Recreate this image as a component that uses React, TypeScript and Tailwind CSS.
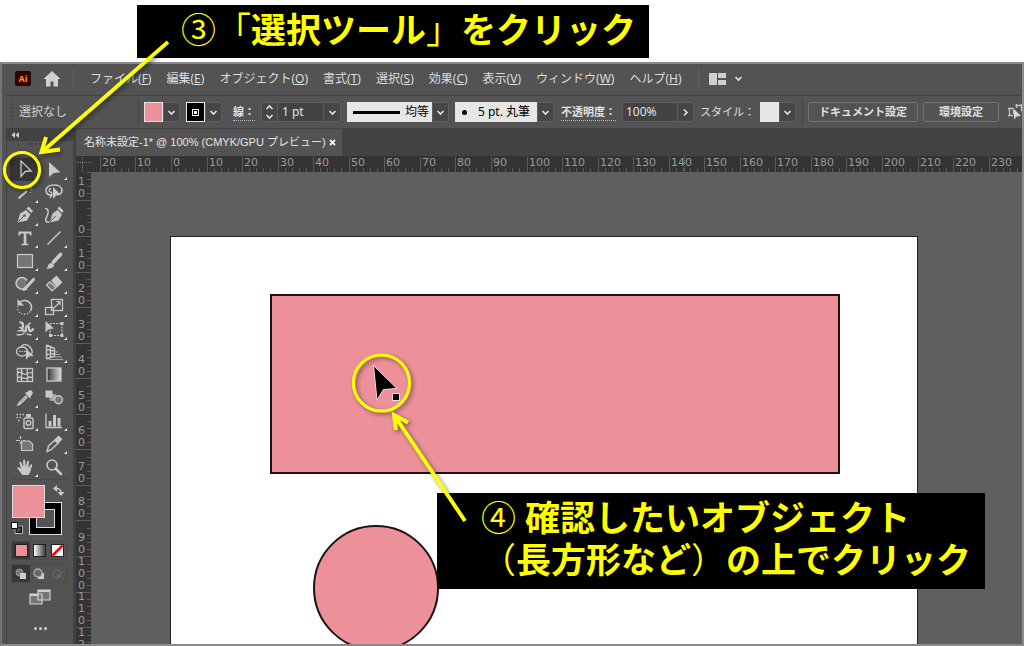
import type { ReactNode } from 'react';
import clsx from 'clsx';

const MENUS = [
  { label: 'ファイル', key: 'F' },
  { label: '編集', key: 'E' },
  { label: 'オブジェクト', key: 'O' },
  { label: '書式', key: 'T' },
  { label: '選択', key: 'S' },
  { label: '効果', key: 'C' },
  { label: '表示', key: 'V' },
  { label: 'ウィンドウ', key: 'W' },
  { label: 'ヘルプ', key: 'H' },
];

// one centimetre on the rulers, in pixels
const RULER_STEP = 35.55;

interface Tool {
  name: string;
  icon: ReactNode;
  more?: boolean;
}

// icons are drawn in a 22x22 box, light grey on the panel
const TOOLS: Tool[] = [
  { name: '選択ツール', icon: <path d="M7 3v15.5l4.3-5 5.9-.5z" fill="none" strokeWidth="1.3" /> },
  { name: 'ダイレクト選択ツール', more: true, icon: <path d="M6 4v15l4.8-4 6.6-.8z" stroke="none" /> },
  {
    name: '自動選択ツール',
    more: true,
    icon: (
      <>
        <path d="M4.500 17.500 13 10" strokeWidth="2" />
        <path d="M15 5v2.500M18.500 9H17M11 6l1.300 1.300M17.800 5.800l-1.300 1.300M16 11l1 1" fill="none" strokeWidth="1" />
      </>
    ),
  },
  {
    name: 'なげなわツール',
    icon: (
      <>
        <path d="M9 14c-3 .5-6-1-6-4.500S6.500 4 11 4s8 2 8 5-1.500 3.500-2 4" fill="none" strokeWidth="1.600" />
        <path d="M8 7.500c-2 0-2.500 3-.5 3.500s2 3-.5 6" fill="none" strokeWidth="1.400" />
        <path d="M10 6v12l3-3.500 5-.5z" stroke="none" />
      </>
    ),
  },
  {
    name: 'ペンツール',
    more: true,
    icon: (
      <>
        <path d="M3.500 18.500l2.500-9 6-3.500 4.500 4.500-3.500 6z" stroke="none" />
        <path d="M12.500 4.500l2-2 4.500 4.500-1.500 2z" stroke="none" />
        <path d="M4.500 17.500l5.500-5.500" stroke="#535353" strokeWidth="1" />
        <circle cx="10.500" cy="11.500" r="1.200" fill="#535353" stroke="none" />
      </>
    ),
  },
  {
    name: '曲線ツール',
    icon: (
      <>
        <path d="M7 18.500l2.500-9 5-3.500 4.500 4.500-3.500 6z" stroke="none" />
        <path d="M14.500 4.500l2-2 4 4.500-1.500 2z" stroke="none" />
        <path d="M7.500 17.500l5-5.500" stroke="#535353" strokeWidth="1" />
        <path d="M2 4.500c3 0 4 2.500 2.500 6.500s-3 5-1 7h3" fill="none" strokeWidth="1.500" />
      </>
    ),
  },
  {
    name: '文字ツール',
    more: true,
    icon: <path d="M4.500 4.500h13v4h-1.600l-.6-2H12.300v10l2.200.6v1.200h-7v-1.200l2.200-.6v-10H6.700l-.6 2H4.500z" stroke="none" />,
  },
  { name: '直線ツール', more: true, icon: <path d="M4.500 17.500 17.500 4.500" strokeWidth="1.500" /> },
  { name: '長方形ツール', more: true, icon: <rect x="3.500" y="4.500" width="15" height="13" fill="#767676" strokeWidth="1.200" /> },
  {
    name: 'ブラシツール',
    more: true,
    icon: (
      <>
        <path d="M17.500 4.500 10.500 12" strokeWidth="3.600" strokeLinecap="round" />
        <path d="M3 18.500c2-.5 1.500-3.500 3.500-5s4.500 0 4.500 1.700-2.500 4-8 3.300z" stroke="none" />
      </>
    ),
  },
  {
    name: 'Shaper ツール',
    more: true,
    icon: (
      <>
        <path d="M10.500 15.500A5.800 5.800 0 1 1 13 7.500" fill="#767676" strokeWidth="1.600" />
        <path d="M19.500 6.500 12.500 14" strokeWidth="3.200" strokeLinecap="round" />
        <path d="M8.500 18.500l2-5 3.500 2.700z" stroke="none" />
      </>
    ),
  },
  {
    name: '消しゴムツール',
    more: true,
    icon: (
      <>
        <path d="M8 7.500l5.500-5 6 7-5.500 5z" stroke="none" />
        <path d="M6.800 8.800 3.500 12l5.500 6 4-3.500z" fill="#767676" strokeWidth="1.200" />
      </>
    ),
  },
  {
    name: '回転ツール',
    more: true,
    icon: (
      <>
        <path d="M5.500 6.500c3-3 8-2.500 10.500.5s2 5 .5 8" fill="none" strokeWidth="1.600" />
        <path d="M16 15.500c-3 4-9 3.500-11.500-.5-1-2-1-4-.5-5" fill="none" strokeWidth="1.300" strokeDasharray="1.200 1.600" />
        <path d="M3.500 3v6.500H10z" stroke="none" />
      </>
    ),
  },
  {
    name: '拡大・縮小ツール',
    more: true,
    icon: (
      <>
        <rect x="8.500" y="3.500" width="11" height="11" fill="none" strokeWidth="1.300" />
        <rect x="2.500" y="11.500" width="8" height="7" fill="none" strokeWidth="1.300" />
        <path d="M11.500 11.500 17 6M13.500 5.700H17v3.500" fill="none" strokeWidth="1.300" />
      </>
    ),
  },
  {
    name: '線幅ツール',
    more: true,
    icon: (
      <>
        <path d="M5.500 4.500c2-.5 4 .5 3.500 3s-2 3.500 0 5 3.500 1 3-1 1-4.500 2.500-3-.5 4 1.500 4.500 2.500-1 3.500-2.500" fill="none" strokeWidth="2.400" />
        <path d="M2.500 16.500c3 .8 6 .3 8-1.500M5 9.500l3 .5M3.500 13l5-.5M12.500 16l5 1M14 6.500l2.500-1.500" fill="none" strokeWidth="1.500" />
      </>
    ),
  },
  {
    name: '自由変形ツール',
    more: true,
    icon: (
      <>
        <path d="M7 5.500h12v12H7z" fill="none" strokeWidth="1.200" strokeDasharray="2 1" />
        <path d="M17.500 4h3v3h-3zM17.500 16h3v3h-3zM6 16h3v3H6z" stroke="none" />
        <path d="M2.500 3v11.500l3-3.200 5.500-.8z" stroke="none" />
      </>
    ),
  },
  {
    name: 'シェイプ形成ツール',
    more: true,
    icon: (
      <>
        <ellipse cx="8" cy="10.500" rx="5.500" ry="4.500" fill="none" strokeWidth="1.300" />
        <path d="M7 5.500C9 2.500 14 3.500 16 6s3 5 1.500 7" fill="none" strokeWidth="1.300" />
        <path d="M5 10.500h7" strokeDasharray="1.500 1" />
        <path d="M12 8v11l2.800-3.500 5-.5z" stroke="none" />
      </>
    ),
  },
  {
    name: '遠近グリッドツール',
    more: true,
    icon: (
      <>
        <path d="M3.500 4v14M3.500 4l8 3.500V15l-8 3M3.500 8.500l8 1.500M3.500 13.500l8-1M7.500 6v10.500" fill="none" strokeWidth="1.400" />
        <path d="M12 11h3M12 13.500h5M10 16h9M6 18.500h14" strokeWidth="1" opacity="0.7" />
      </>
    ),
  },
  {
    name: 'メッシュツール',
    icon: (
      <>
        <rect x="3.500" y="4.500" width="15" height="13" fill="none" strokeWidth="1.300" />
        <path d="M3.500 9c4-3 6 3 9 1s4-2 6-1M3.500 14c4-3 6 2 9 0s4-1 6 0M7 4.500c3 4-2 8 1 13M14 4.500c-3 4 2 8-1 13" fill="none" strokeWidth="1.300" />
      </>
    ),
  },
  { name: 'グラデーションツール', icon: <rect x="4" y="4" width="14" height="13" fill="url(#grad-dark)" strokeWidth="1.300" /> },
  {
    name: 'スポイトツール',
    more: true,
    icon: (
      <>
        <path d="M12.500 8.500 5 16l-1 2 2-.8L13.500 10" fill="none" strokeWidth="1.400" />
        <path d="M11 6l5 5.500 1-1.500-.3-.8c2-1.500 2.800-3.700 1.300-5.200s-3.500-.7-5 1.200L12.500 5z" stroke="none" />
      </>
    ),
  },
  {
    name: 'ブレンドツール',
    icon: (
      <>
        <rect x="2.500" y="3.500" width="7" height="7" stroke="none" />
        <rect x="6.500" y="7" width="7" height="7" rx="2" stroke="none" opacity="0.7" />
        <circle cx="15.500" cy="12.800" r="4" fill="#767676" strokeWidth="1.400" />
      </>
    ),
  },
  {
    name: 'シンボルスプレーツール',
    more: true,
    icon: (
      <>
        <rect x="10" y="8" width="9" height="10.500" rx="1" fill="none" strokeWidth="1.400" />
        <path d="M12 4h5v3h-5z" stroke="none" />
        <circle cx="14.500" cy="13" r="2.300" fill="none" strokeWidth="1.400" />
        <path d="M2.500 4.500h1.500M5.500 4.500H7M8.500 4.500H10M2.500 7.500h1.500M5.500 7.500H7M4 10.500h1.500" strokeWidth="1.500" />
      </>
    ),
  },
  {
    name: '棒グラフツール',
    more: true,
    icon: (
      <>
        <path d="M3 3.500v14h16" fill="none" strokeWidth="1.300" />
        <path d="M5.500 11h3v5.500h-3zM10 5h3v11.500h-3zM14.500 8h3v8.500h-3z" stroke="none" />
      </>
    ),
  },
  {
    name: 'アートボードツール',
    icon: (
      <>
        <path d="M7.500 8h8l3 3v6.500h-11z" fill="#767676" strokeWidth="1.200" />
        <path d="M2 7.500h4M9 7.500h2M6.500 3v3M6.500 9v2" fill="none" strokeWidth="1.200" />
      </>
    ),
  },
  {
    name: 'スライスツール',
    more: true,
    icon: (
      <>
        <path d="M11.500 7.500 5.500 13 4 18.500l4.500-2 6.500-6.500z" fill="none" strokeWidth="1.400" />
        <path d="M11.500 6.500l4-4 4 3.500-4 4.500z" stroke="none" />
      </>
    ),
  },
  {
    name: '手のひらツール',
    more: true,
    icon: (
      <path
        d="M8.500 19c-1.500-1.500-3-4.500-5.500-7 .8-1.200 2.200-.7 4 1L5.300 6.300c.6-1 1.700-.8 2.200.4L9.300 11 9 4.300c.6-1.200 2-1 2.200.3l.5 6.100 1.500-5.500c.7-1 2-.6 1.800.6L14.300 12l2.400-3.600c.9-.7 1.900.1 1.500 1.100C16.800 12.500 17 16 14.500 19z"
        stroke="none"
      />
    ),
  },
  {
    name: 'ズームツール',
    icon: (
      <>
        <circle cx="9" cy="9" r="5" fill="none" strokeWidth="1.600" />
        <path d="M13 13l5 5" strokeWidth="2.600" strokeLinecap="round" />
      </>
    ),
  },
];

function Chevron({ right = false }: { right?: boolean }) {
  return (
    <svg width="9" height="9" viewBox="0 0 9 9" fill="none" stroke="#e4e4e4" strokeWidth="1.6" aria-hidden="true">
      <path d={right ? 'M3 1.500l3 3-3 3' : 'M1.500 3l3 3 3-3'} />
    </svg>
  );
}

function DropButton({ label, right }: { label: string; right?: boolean }) {
  return (
    <button type="button" aria-label={label} className="flex h-full w-[17px] shrink-0 items-center justify-center rounded-r-xs border border-[#5e5e5e] bg-[#464646]">
      <Chevron right={right} />
    </button>
  );
}

function MenuBar() {
  return (
    <div className="flex h-8 items-center border-b border-[#434343] pb-0.5 pl-[9px] text-xs text-[#dcdcdc]">
      <span className="flex h-[15px] w-4 items-center justify-center rounded-xs bg-[#310000] text-[9px] font-bold text-[#ff9a00]">Ai</span>
      <button type="button" aria-label="ホーム" className="ml-3 flex">
        <svg width="18" height="18" viewBox="0 0 18 18" fill="#d0d0d0">
          <path d="M9 1 0.500 9H3v7.500h4.500v-5h3v5H15V9h2.500z" />
        </svg>
      </button>
      <span className="ml-3 h-5 w-px bg-[#626262]" />
      <nav className="ml-4 flex gap-[15px]">
        {MENUS.map((m) => (
          <button key={m.key} type="button" className="whitespace-nowrap">
            {m.label}(<u>{m.key}</u>)
          </button>
        ))}
      </nav>
      <span className="ml-4 h-5 w-px bg-[#626262]" />
      <button type="button" aria-label="ワークスペース" className="ml-[10px] flex items-center gap-2">
        <svg width="17" height="12" viewBox="0 0 17 12" fill="#cfcfcf">
          <path d="M0 0h8v12H0zM9 0h8v5H9zM9 7h8v5H9z" />
        </svg>
        <Chevron />
      </button>
    </div>
  );
}

function ControlBar() {
  return (
    <div className="flex h-[33px] items-center overflow-hidden border-b border-[#434343] pl-[5px] text-xs whitespace-nowrap text-[#e0e0e0] *:shrink-0">
      <Grip />
      <span className="ml-[5px] w-[119px] text-[#cfcfcf]">選択なし</span>
      <span className="h-6 w-px bg-[#454545]" />

      <div className="ml-[5px] flex h-5">
        <span className="w-[19px] border border-[#e6e6e6] bg-[#ec909a]" />
        <DropButton label="塗り" />
      </div>
      <div className="ml-[6px] flex h-5">
        <span className="flex w-[19px] items-center justify-center border border-[#e6e6e6] bg-black">
          <span className="flex size-[7px] items-center justify-center border border-white">
            <span className="size-[3px] bg-white" />
          </span>
        </span>
        <DropButton label="線" />
      </div>

      <label htmlFor="stroke" className="ml-[11px] w-[22px] border-b border-dotted border-[#bbb] text-[11px] leading-4 font-bold">
        線：
      </label>
      <div className="ml-[6px] flex h-5 rounded-xs border border-[#5e5e5e] bg-[#464646]">
        <button type="button" aria-label="線幅を増減" className="flex w-[15px] items-center justify-center">
          <svg width="9" height="16" viewBox="0 0 9 16" fill="none" stroke="#e4e4e4" strokeWidth="1.6">
            <path d="M1.500 5l3-3 3 3M1.500 11l3 3 3-3" />
          </svg>
        </button>
        <input id="stroke" defaultValue="1 pt" className="w-[47px] border-x border-[#5e5e5e] bg-[#434343] pl-1 text-xs" />
        <button type="button" aria-label="線幅の一覧" className="flex w-4 items-center justify-center">
          <Chevron />
        </button>
      </div>

      <div className="ml-[6px] flex h-5">
        <div className="flex w-[85px] items-center bg-[#e6e6e6] pl-[6px] text-black">
          <span className="h-[3px] w-[47px] bg-black" />
          <select aria-label="可変線幅プロファイル" className="ml-[5px] w-[27px] appearance-none bg-transparent text-xs">
            <option>均等</option>
          </select>
        </div>
        <DropButton label="プロファイルの一覧" />
      </div>

      <div className="ml-[6px] flex h-5">
        <div className="flex w-[82px] items-center bg-[#e6e6e6] pl-[7px] text-black">
          <span className="size-[5px] rounded-full bg-black" />
          <select aria-label="ブラシ定義" className="ml-[11px] w-[59px] appearance-none bg-transparent text-xs">
            <option>5 pt. 丸筆</option>
          </select>
        </div>
        <DropButton label="ブラシの一覧" />
      </div>

      <label htmlFor="opacity" className="ml-[7px] w-[55px] border-b border-dotted border-[#bbb] text-[11px] leading-4 font-bold">
        不透明度：
      </label>
      <div className="ml-[6px] flex h-5">
        <input id="opacity" defaultValue="100%" className="w-[55px] border border-r-0 border-[#5e5e5e] bg-[#434343] pl-[3px] text-xs" />
        <DropButton label="不透明度スライダー" right />
      </div>

      <span className="ml-[6px] w-[55px] text-[11px]">スタイル：</span>
      <div className="ml-[5px] flex h-5">
        <span className="w-[19px] bg-[#e6e6e6]" />
        <DropButton label="スタイル" />
      </div>
      <span className="ml-[6px] h-6 w-px bg-[#454545]" />

      <button type="button" className="ml-[5px] h-5 w-[110px] rounded-xs border border-[#727272] text-[11px] leading-4 font-bold">
        ドキュメント設定
      </button>
      <button type="button" className="ml-[5px] h-5 w-[76px] rounded-xs border border-[#727272] text-[11px] leading-4 font-bold">
        環境設定
      </button>
      <button type="button" aria-label="整列" className="ml-2">
        <svg width="18" height="18" viewBox="0 0 18 18" fill="none" stroke="#c4c4c4" strokeWidth="1.300">
          <path d="M1 5.500h6M1 12.500h5M2.500 5.500v7M6.500 7v4M8.500 2.500h6v6M9.500 1v4M14.500 1v4M14.500 5.500h3" />
          <path d="M7 6v10.500l2.500-3 4.500-.5z" fill="#dadada" stroke="none" />
        </svg>
      </button>
    </div>
  );
}

function Grip() {
  return <span className="h-[18px] w-[3px] shrink-0 border-l-2 border-dotted border-[#424242]" />;
}

function ToolButton({ tool, active }: { tool: Tool; active: boolean }) {
  return (
    <button type="button" aria-label={tool.name} className={clsx('relative flex items-center justify-center', active && 'rounded-xs bg-[#353535]')}>
      <svg width="22" height="22" viewBox="0 0 22 22" fill="#c8c8c8" stroke="#c8c8c8">
        {tool.icon}
      </svg>
      {tool.more && (
        <svg width="3" height="3" viewBox="0 0 3 3" className="absolute right-px bottom-px">
          <path d="M3 0v3H0z" fill="#e8e8e8" />
        </svg>
      )}
    </button>
  );
}

function ColorPanel() {
  return (
    <div className="relative mt-[5px] ml-[5px] h-[50px] w-[55px]">
      <button type="button" aria-label="線のカラー" className="absolute top-[17px] left-[17px] size-[33px] border border-[#dcdcdc] bg-black p-[6px]">
        <span className="block size-full border border-[#dcdcdc] bg-[#535353]" />
      </button>
      <button type="button" aria-label="塗りのカラー" className="absolute top-0 left-0 size-[33px] border border-[#dcdcdc] bg-[#ec909a]" />
      <svg width="11" height="11" viewBox="0 0 11 11" fill="none" stroke="#c8c8c8" strokeWidth="1.6" className="absolute top-0 right-[3px]">
        <path d="M3 3.500c4 0 5 1.500 5 5" />
        <path d="M4 0v7L0 3.500zM4.500 7h7L8 11z" fill="#c8c8c8" stroke="none" />
      </svg>
      <svg width="12" height="12" viewBox="0 0 12 12" className="absolute bottom-px left-[-1px]">
        <rect x="4.500" y="4.500" width="6" height="6" fill="none" stroke="#111" strokeWidth="2" />
        <rect x="4" y="4" width="7.500" height="7.500" fill="none" stroke="#ddd" strokeWidth="0.800" />
        <rect x="0.500" y="0.500" width="6" height="6" fill="#fff" stroke="#111" />
      </svg>
    </div>
  );
}

function Toolbar() {
  return (
    <aside className="w-[70px] shrink-0 border-r-[3px] border-l border-[#424242]">
      <div className="flex h-3 items-center bg-[#424242] pl-1">
        <svg width="9" height="7" viewBox="0 0 9 7" fill="#d0d0d0">
          <path d="M4 0v6L0.500 3zM8 0v6L4.500 3z" />
        </svg>
      </div>
      <div className="flex h-[17px] justify-center pt-[2px]">
        <span className="h-[3px] w-6 border-t-2 border-dotted border-[#424242]" />
      </div>
      <div className="ml-[3px] grid h-80 w-[58px] grid-cols-2 grid-rows-14">
        {TOOLS.map((tool, i) => (
          <ToolButton key={tool.name} tool={tool} active={i === 0} />
        ))}
      </div>
      <div className="mx-[5px] mt-px h-px bg-[#494949]" />
      <ColorPanel />

      <div className="mt-[6px] ml-1 grid h-[19px] w-14 grid-cols-3 rounded-xs border border-[#4a4a4a]">
        <button type="button" aria-label="カラー" className="flex items-center justify-center bg-[#383838]">
          <span className="size-[13px] border border-[#222] bg-[#ec909a]" />
        </button>
        <button type="button" aria-label="グラデーション" className="flex items-center justify-center">
          <span className="size-[13px] border border-[#222] bg-linear-to-r from-white to-[#444]" />
        </button>
        <button type="button" aria-label="なし" className="flex items-center justify-center">
          <svg width="13" height="13" viewBox="0 0 13 13">
            <rect x="0.500" y="0.500" width="12" height="12" fill="#fff" stroke="#222" />
            <path d="M1.500 11.500l10-10" stroke="#f00" strokeWidth="2.500" />
          </svg>
        </button>
      </div>

      <div className="mt-1 ml-1 grid h-[19px] w-14 grid-cols-3 rounded-xs border border-[#4a4a4a]">
        <button type="button" aria-label="標準描画" className="flex items-center justify-center bg-[#383838]">
          <svg width="12" height="12" viewBox="0 0 12 12">
            <circle cx="4.500" cy="4.500" r="3.500" fill="#777" stroke="#999" />
            <rect x="5" y="5" width="6" height="6" fill="#ccc" />
          </svg>
        </button>
        <button type="button" aria-label="背面描画" className="flex items-center justify-center">
          <svg width="12" height="12" viewBox="0 0 12 12">
            <rect x="5" y="5" width="6" height="6" fill="#ccc" />
            <circle cx="5" cy="5" r="4" fill="#666" stroke="#aaa" strokeWidth="1.300" />
          </svg>
        </button>
        <button type="button" aria-label="内側描画" className="flex items-center justify-center">
          <svg width="12" height="12" viewBox="0 0 12 12">
            <circle cx="6" cy="6" r="4" fill="none" stroke="#686868" strokeWidth="1.300" />
            <path d="M6 6h3v3H6z" fill="#686868" />
          </svg>
        </button>
      </div>

      <div className="mt-[6px] flex flex-col items-center gap-[21px]">
        <button type="button" aria-label="スクリーンモード" className="flex">
          <svg width="22" height="17" viewBox="0 0 22 17" fill="#767676" stroke="#cfcfcf" strokeWidth="1.200">
            <path d="M1 5h12v10H1zM9 1h12v10H9z" />
            <path d="M1 6h8M9 2h12" strokeWidth="2" />
          </svg>
        </button>
        <button type="button" aria-label="ツールバーを編集" className="flex gap-[2px]">
          <span className="size-[3px] rounded-full bg-[#d0d0d0]" />
          <span className="size-[3px] rounded-full bg-[#d0d0d0]" />
          <span className="size-[3px] rounded-full bg-[#d0d0d0]" />
        </button>
      </div>
    </aside>
  );
}

function HorizontalRuler() {
  const marks = Array.from({ length: 26 }, (_, i) => i - 2);
  return (
    <svg width="100%" height="16" className="bg-[#343434] font-['DejaVu_Sans',sans-serif] text-[11px]" fill="#9a9a9a" stroke="none">
      {marks.map((n) => {
        const x = Math.round(80 + n * RULER_STEP);
        return (
          <g key={n}>
            <rect x={x} y="1" width="1" height="15" fill="#5c5c5c" />
            {[1, 2, 3, 4].map((s) => (
              <rect key={s} x={Math.round(x + (s * RULER_STEP) / 5)} y="12" width="1" height="4" fill="#5c5c5c" />
            ))}
            <text x={x + 2} y="10">
              {Math.abs(n * 10)}
            </text>
          </g>
        );
      })}
      <path d="M593.500 0v16" stroke="#777" strokeDasharray="1 1" />
    </svg>
  );
}

function VerticalRuler() {
  const marks = Array.from({ length: 14 }, (_, i) => i - 1);
  return (
    <div className="relative w-[15px] shrink-0 overflow-hidden bg-[#343434]">
      <svg width="15" height="530" className="absolute top-0 left-0 font-['DejaVu_Sans',sans-serif] text-[11px]" fill="#9a9a9a">
        {marks.map((n) => {
          const y = Math.round(64 + n * RULER_STEP);
          // the digits of a label are stacked, the last one just above its line
          const digits = String(Math.abs(n * 10)).split('');
          return (
            <g key={n}>
              <rect x="0" y={y} width="15" height="1" fill="#5c5c5c" />
              {[1, 2, 3, 4].map((s) => (
                <rect key={s} x="11" y={Math.round(y - (s * RULER_STEP) / 5)} width="4" height="1" fill="#5c5c5c" />
              ))}
              {digits.map((d, i) => (
                <text key={i} x="2" y={y - 3 - (digits.length - 1 - i) * 12}>
                  {d}
                </text>
              ))}
            </g>
          );
        })}
      </svg>
    </div>
  );
}

function Canvas() {
  return (
    <main className="relative flex-1 overflow-hidden bg-[#5f5f5f]">
      <div className="absolute top-16 -bottom-px left-[79px] w-[748px] border border-[#222] bg-white" />
      <div className="absolute top-[122px] left-[179px] h-[180px] w-[570px] border-2 border-[#1c1214] bg-[#ec909a]" />
      <div className="absolute top-[353px] left-[222px] size-[126px] rounded-full border-2 border-[#1c1214] bg-[#ec909a]" />
      <p className="absolute top-[321px] left-[346px] h-24 w-[548px] bg-black pt-1 pl-11 text-[35px] leading-[42px] font-bold whitespace-nowrap text-[#ffff00]">
        <span className="font-normal">④</span> 確認したいオブジェクト
        <br />
        <span className="font-normal">（</span>長方形など<span className="font-normal">）</span>の上でクリック
      </p>
    </main>
  );
}

function DocumentArea() {
  return (
    <div className="flex min-w-0 flex-1 flex-col">
      <div className="flex h-[27px] bg-[#424242]">
        <div className="flex w-[266px] items-center gap-3 bg-[#535353] pl-2 font-['Liberation_Sans','Noto_Sans_CJK_JP',sans-serif] text-[11px] whitespace-nowrap text-[#e4e4e4]">
          <span className="w-[233px]">名称未設定-1* @ 100% (CMYK/GPU プレビュー)</span>
          <button type="button" aria-label="閉じる">
            <svg width="7" height="7" viewBox="0 0 7 7" stroke="#f0f0f0" strokeWidth="1.800">
              <path d="M1 1l5 5M6 1 1 6" />
            </svg>
          </button>
        </div>
      </div>
      <div className="flex h-4">
        <svg width="15" height="16" className="shrink-0 bg-[#343434]" stroke="#777" strokeDasharray="1 1">
          <path d="M6.500 1v15M0 6.500h15" />
        </svg>
        <div className="min-w-0 flex-1">
          <HorizontalRuler />
        </div>
      </div>
      <div className="flex flex-1">
        <VerticalRuler />
        <Canvas />
      </div>
    </div>
  );
}

// circles, arrows and the mouse pointer drawn over the whole window
function Annotations() {
  return (
    <svg width="1024" height="646" viewBox="0 0 1024 646" className="pointer-events-none absolute top-0 left-0" fill="none" stroke="#ffff00">
      <g className="drop-shadow-[2px_2px_2px_rgba(0,0,0,0.45)]">
        <circle cx="22" cy="170" r="17.500" strokeWidth="3.200" />
        <path d="M168 42 43 151" strokeWidth="3.800" />
        <path d="M46 137 41.500 152 60 149.500" strokeWidth="4" />
        <circle cx="381.500" cy="383" r="28" strokeWidth="3.200" />
        <path d="M465 521 394 415" strokeWidth="4" />
        <path d="M396 430 394 415 408 422.500" strokeWidth="4" />
      </g>
      <path d="M373.500 365.500 377 400l6.500-10.500 13.500-1z" fill="#000" stroke="#f8d8dc" strokeWidth="1" />
      <rect x="392.500" y="393.500" width="7" height="7" fill="#000" stroke="#f8d8dc" strokeWidth="1" />
    </svg>
  );
}

export default function App() {
  return (
    <div className="relative flex min-h-screen flex-col bg-white font-['Noto_Sans','Noto_Sans_CJK_JP',sans-serif]">
      <svg width="0" height="0" className="absolute" aria-hidden="true">
        <linearGradient id="grad-dark">
          <stop offset="0" stopColor="#333" />
          <stop offset="1" stopColor="#ddd" />
        </linearGradient>
      </svg>
      <header className="h-[62px] pt-[5px] pl-[137px]">
        <p className="h-[53px] w-[512px] bg-black pl-11 text-[35px] leading-[49px] font-bold whitespace-nowrap text-[#ffff00]">
          <span className="font-normal">③「</span>選択ツール<span className="font-normal">」</span>をクリック
        </p>
      </header>
      <div className="flex flex-1 flex-col border-2 border-t-[#8a8a8a] border-r-[#8a8a8a] border-b-[#8a8a8a] border-l-[#757575] bg-[#535353] pl-1">
        <MenuBar />
        <ControlBar />
        <div className="flex flex-1">
          <Toolbar />
          <DocumentArea />
        </div>
      </div>
      <Annotations />
    </div>
  );
}
